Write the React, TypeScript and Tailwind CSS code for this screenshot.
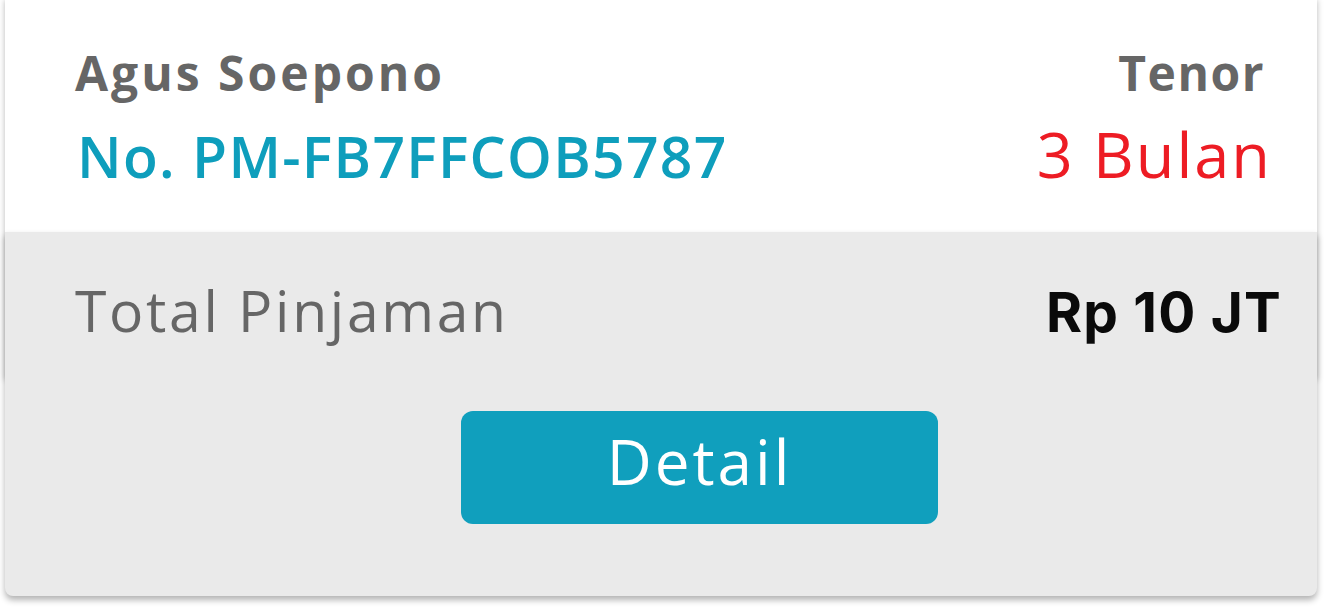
export default function App() {
  return (
    <div className="min-h-screen bg-white pl-[5px]" style={{ width: 1325 }}>
      <div className="w-[1312px]">
        {/* top card */}
        <div className="h-[380px] bg-white shadow-[0_0_6px_rgba(0,0,0,0.28)] px-[70px] pt-[49px] font-['Open_Sans',sans-serif]">
          <div className="flex justify-between items-baseline">
            <span className="text-[48px] leading-[48px] font-bold text-[#666666] tracking-[3px]">
              Agus Soepono
            </span>
            <span className="text-[48px] leading-[48px] font-bold text-[#666666] mr-[-18px] tracking-[1.5px]">
              Tenor
            </span>
          </div>
          <div className="flex justify-between items-baseline mt-[25px]">
            <span className="text-[57px] leading-[57px] font-semibold text-[#0E9EBC] tracking-[1.3px] ml-[2px]">
              No. PM-FB7FFCOB5787
            </span>
            <span className="text-[63px] leading-[63px] font-normal text-[#ED1C24] mr-[-25px] tracking-[2px]">
              3 Bulan
            </span>
          </div>
        </div>

        {/* gray panel */}
        <div className="relative -mt-[148px] h-[364px] bg-[#EAEAEA] rounded-b-[8px] shadow-[0_4px_6px_rgba(0,0,0,0.3)] pl-[70px] pr-[36px] pt-[50px]">
          <div className="flex justify-between items-baseline">
            <span className="font-['Open_Sans',sans-serif] text-[57px] leading-[57px] text-[#666666] tracking-[2.7px]">
              Total Pinjaman
            </span>
            <span className="font-['Inter',sans-serif] text-[55px] leading-[55px] font-bold text-[#0a0a0a] tracking-[1.2px] mr-[-1px]">
              Rp 10 JT
            </span>
          </div>
          <div className="flex mt-[71px] pl-[386px]">
            <button className="w-[477px] h-[113px] rounded-[12px] bg-[#109FBD] text-white font-['Open_Sans',sans-serif] text-[62px] leading-[62px] tracking-[3px] pb-[13px] flex items-center justify-center">
              Detail
            </button>
          </div>
        </div>
      </div>
    </div>
  );
}
